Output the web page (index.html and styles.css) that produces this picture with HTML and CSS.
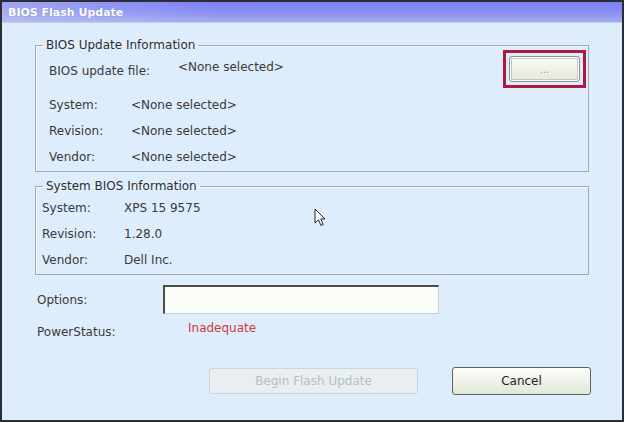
FILE: index.html
```html
<!DOCTYPE html>
<html lang="en">
<head>
  <meta charset="UTF-8">
  <title>BIOS Flash Update</title>
  <link rel="stylesheet" href="styles.css">
</head>
<body>
<div class="window">
  <div class="titlebar">BIOS Flash Update</div>
  <div class="content">
    <fieldset class="group update-info">
      <legend>BIOS Update Information</legend>
      <div class="file-row">
        <span class="label">BIOS update file:</span>
        <span class="value">&lt;None selected&gt;</span>
        <div class="browse-focus"><button class="browse">...</button></div>
      </div>
      <div class="row"><span class="label">System:</span><span class="value">&lt;None selected&gt;</span></div>
      <div class="row"><span class="label">Revision:</span><span class="value">&lt;None selected&gt;</span></div>
      <div class="row"><span class="label">Vendor:</span><span class="value">&lt;None selected&gt;</span></div>
    </fieldset>

    <fieldset class="group system-info">
      <legend>System BIOS Information</legend>
      <div class="row"><span class="label">System:</span><span class="value">XPS 15 9575</span></div>
      <div class="row"><span class="label">Revision:</span><span class="value">1.28.0</span></div>
      <div class="row"><span class="label">Vendor:</span><span class="value">Dell Inc.</span></div>
    </fieldset>

    <div class="options">
      <span class="label">Options:</span>
      <input class="options-input" type="text">
    </div>

    <div class="power">
      <span class="label">PowerStatus:</span>
      <span class="status">Inadequate</span>
    </div>

    <div class="actions">
      <button class="btn btn-begin" disabled>Begin Flash Update</button>
      <button class="btn btn-cancel">Cancel</button>
    </div>
  </div>

  <!-- mouse pointer captured in the screenshot -->
  <svg class="cursor" width="12" height="19" viewBox="0 0 12 19">
    <path d="M1 1 V15 L4.5 11.8 L7 17.5 L9.2 16.5 L6.8 11 H11 Z" fill="#fff" stroke="#222" stroke-width="1" stroke-linejoin="round"/>
  </svg>
</div>
</body>
</html>
```

FILE: styles.css
```css
body {
  margin: 0;
  background-color: #ffffff;
}
.window {
  position: relative;
  width: 624px;
  height: 422px;
  box-sizing: border-box;
  border: 2px solid #2b2e34;
  background-color: #deedfc;
  font-family: "DejaVu Sans", Verdana, sans-serif;
  font-size: 12px;
  color: #3a3a3a;
}
.titlebar {
  height: 21px;
  line-height: 21px;
  padding-left: 6px;
  background:
    linear-gradient(to right, rgba(205, 210, 232, 0.45), rgba(205, 210, 232, 0) 35%),
    linear-gradient(to bottom, #7a7ff7, #8a90f5 55%, #a6adef);
  border-bottom: 1px solid #c4cbf2;
  box-sizing: border-box;
  color: #ffffff;
  font-size: 11px;
  font-weight: bold;
  text-shadow: 0 0 1px rgba(60, 60, 120, 0.4);
}
.content {
  padding-left: 33px;
}
.group {
  width: 554px;
  box-sizing: border-box;
  min-width: 0;
  margin: 0;
  padding: 0 0 1px 0;
  border: 1px solid #a6abb1;
  box-shadow: inset 1px 1px 0 #f4f8fc;
}
.group legend {
  margin-left: 7px;
  padding: 0 3px;
  line-height: 10px;
  font-size: 12px;
  color: #2e2e2e;
}
.update-info {
  margin-top: 17px;
}
.system-info {
  margin-top: 9px;
  padding-top: 4px;
}
.file-row {
  display: flex;
  align-items: flex-start;
  height: 38px;
  margin-bottom: 4px;
  padding-left: 13px;
}
.file-row .label {
  width: 129px;
  margin-top: 14px;
  line-height: 14px;
}
.file-row .value {
  margin-top: 10px;
  line-height: 14px;
}
.browse-focus {
  margin-left: auto;
  margin-right: 2px;
  padding: 3px;
  border: 3px solid #b1183c;
}
.browse {
  display: block;
  width: 71px;
  height: 26px;
  padding: 0;
  border: 1px solid #8b908f;
  border-radius: 3px;
  background: linear-gradient(to bottom, #fbfcf8, #e3e9d9);
  box-shadow: inset 0 0 0 1px #ffffff, inset 0 0 0 2px #c3c8c4;
  color: #9aa0a2;
  font-family: "DejaVu Sans", Verdana, sans-serif;
  font-size: 10px;
}
.row {
  display: flex;
  align-items: center;
  height: 26px;
}
.update-info .row {
  padding-left: 13px;
}
.update-info .row .label {
  width: 82px;
}
.system-info .row {
  padding-left: 6px;
}
.system-info .row .label {
  width: 82px;
}
.options {
  display: flex;
  align-items: center;
  margin-top: 10px;
  padding-left: 2px;
}
.options .label {
  width: 126px;
}
.options-input {
  width: 276px;
  height: 29px;
  box-sizing: border-box;
  margin: 0;
  background-color: #fbfdf8;
  border: 1px solid #c8ced2;
  border-top: 2px solid #4a4c50;
  border-left: 2px solid #4a4c50;
}
.power {
  display: flex;
  align-items: flex-start;
  margin-top: 6px;
  padding-left: 2px;
}
.power .label {
  width: 151px;
  margin-top: 4px;
  line-height: 16px;
}
.status {
  line-height: 16px;
  color: #d2393b;
}
.actions {
  display: flex;
  align-items: center;
  gap: 34px;
  margin-top: 27px;
  padding-left: 174px;
}
.btn {
  box-sizing: border-box;
  padding: 0;
  border-radius: 3px;
  font-family: "DejaVu Sans", Verdana, sans-serif;
  font-size: 12px;
}
.btn-begin {
  width: 209px;
  height: 26px;
  border: 1px solid #cfd5d8;
  background-color: #e8eef2;
  color: #b7bec4;
}
.btn-cancel {
  width: 139px;
  height: 28px;
  border: 1px solid #5c6064;
  background: linear-gradient(to bottom, #fcfdfb, #e1e8d6);
  color: #222222;
}
.cursor {
  position: absolute;
  left: 312px;
  top: 206px;
}
```
